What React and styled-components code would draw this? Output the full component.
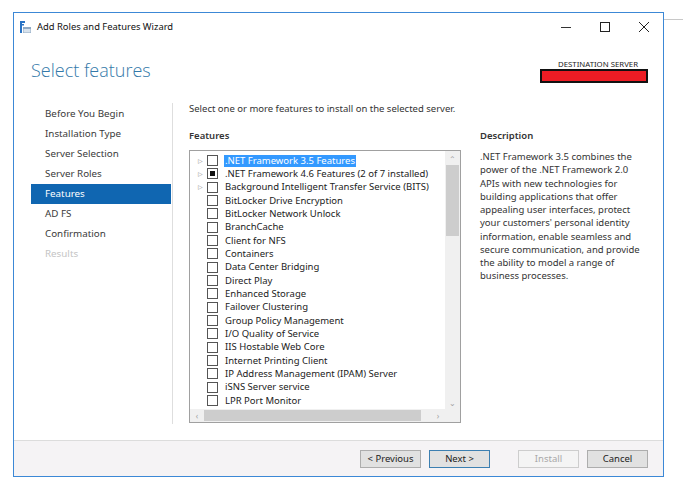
import React from 'react';
import styled, { createGlobalStyle } from 'styled-components';

const GlobalStyle = createGlobalStyle`
  html, body {
    margin: 0;
    padding: 0;
    background: #ffffff;
  }
  body {
    font-family: "Noto Sans", "Open Sans", sans-serif;
    color: #333;
  }
`;

const Page = styled.div`
  position: relative;
  width: 683px;
  height: 487px;
  padding: 12px 0 0 13px;
  box-sizing: border-box;
  overflow: hidden;

  &::after {
    content: '';
    position: absolute;
    top: 19px;
    left: 664px;
    width: 19px;
    height: 1px;
    background: #c8c8c8;
  }
`;

const Window = styled.div`
  width: 651px;
  height: 465px;
  box-sizing: border-box;
  border: 1px solid #3c88d6;
  background: #fff;
  display: flex;
  flex-direction: column;
`;

const TitleBar = styled.div`
  height: 27px;
  display: flex;
  align-items: center;
  padding-left: 6px;
`;

const TitleText = styled.span`
  margin-left: 5px;
  font-size: 9.4px;
  color: #111;
`;

const WindowButtons = styled.div`
  margin-left: auto;
  display: flex;
  height: 100%;
`;

const WinBtn = styled.div`
  width: 39px;
  display: flex;
  align-items: center;
  justify-content: center;
`;

const Header = styled.div`
  height: 60px;
  display: flex;
  align-items: flex-start;
  padding: 18px 15px 0 17px;
  box-sizing: border-box;
`;

const Heading = styled.h1`
  margin: 0;
  font-family: "Open Sans", "Noto Sans", sans-serif;
  font-size: 18px;
  font-weight: 300;
  color: #3479a9;
  line-height: 24px;
`;

const Destination = styled.div`
  margin-left: auto;
  margin-top: 2px;
  display: flex;
  flex-direction: column;
  align-items: flex-end;
`;

const DestLabel = styled.div`
  font-size: 7.8px;
  color: #222;
  margin-right: 10px;
  line-height: 9px;
`;

const RedactBox = styled.div`
  width: 108px;
  height: 14px;
  box-sizing: border-box;
  border: 2px solid #111;
  background: #ed1c24;
`;

const Body = styled.div`
  flex: 1;
  display: flex;
  padding-left: 17px;
`;

const Nav = styled.nav`
  width: 142px;
  padding-top: 1px;
  box-sizing: border-box;
  border-right: 1px solid #dedede;
  margin-bottom: 16px;
  margin-top: 3px;
`;

const NavItem = styled.div`
  height: 20px;
  line-height: 20px;
  padding-left: 14px;
  margin-right: 1px;
  font-size: 9.8px;
  color: ${({ $disabled, $active }) => ($active ? '#fff' : $disabled ? '#c4c4c4' : '#3a3a3a')};
  background: ${({ $active }) => ($active ? '#1066b1' : 'transparent')};
`;

const Content = styled.div`
  flex: 1;
  display: flex;
  padding-left: 16px;
  font-size: 9.5px;
`;

const MainCol = styled.div`
  width: 272px;
  display: flex;
  flex-direction: column;
`;

const Intro = styled.div`
  height: 26px;
  line-height: 18px;
  color: #333;
`;

const SectionLabel = styled.div`
  font-weight: 600;
  color: #333;
  height: 24px;
  line-height: 20px;
`;

const ListBox = styled.div`
  height: 273px;
  box-sizing: border-box;
  border: 1px solid #a0a0a0;
  display: grid;
  grid-template-columns: 1fr 15px;
  grid-template-rows: 1fr 13px;
`;

const Rows = styled.div`
  padding-top: 3px;
  overflow: hidden;
`;

const Row = styled.div`
  height: 13.33px;
  display: flex;
  align-items: center;
  white-space: nowrap;
`;

const Expander = styled.span`
  width: 17px;
  padding-left: 8px;
  box-sizing: border-box;
  font-size: 6px;
  color: #888;
`;

const CheckBox = styled.span`
  width: 11px;
  height: 11px;
  box-sizing: border-box;
  border: 1px solid #555;
  background: #fff;
  display: flex;
  align-items: center;
  justify-content: center;

  &::after {
    content: '';
    width: 5px;
    height: 5px;
    background: ${({ $partial }) => ($partial ? '#111' : 'transparent')};
  }
`;

const RowText = styled.span`
  margin-left: 6px;
  padding: 0 1px;
  line-height: 12px;
  color: ${({ $selected }) => ($selected ? '#fff' : '#222')};
  background: ${({ $selected }) => ($selected ? '#3399ff' : 'transparent')};
`;

const VScroll = styled.div`
  background: #f0f0f0;
  display: flex;
  flex-direction: column;
  align-items: stretch;
`;

const ScrollArrow = styled.div`
  height: 14px;
  display: flex;
  align-items: center;
  justify-content: center;
  color: #a0a0a0;
  font-size: 8px;
`;

const VThumb = styled.div`
  height: 71px;
  margin: 0 1px;
  background: #cdcdcd;
`;

const HScroll = styled.div`
  background: #f0f0f0;
  display: flex;
  align-items: stretch;
`;

const HArrow = styled.div`
  width: 14px;
  display: flex;
  align-items: center;
  justify-content: center;
  color: #a0a0a0;
  font-size: 8px;
`;

const HThumb = styled.div`
  width: 217px;
  margin: 1px 0;
  background: #cdcdcd;
`;

const Spacer = styled.div`
  flex: 1;
`;

const Corner = styled.div`
  background: #f0f0f0;
`;

const DescCol = styled.div`
  margin-left: 19px;
  padding-top: 26px;
  width: 165px;
`;

const DescText = styled.div`
  line-height: 13.25px;
  color: #333;
  white-space: pre-line;
`;

const Footer = styled.div`
  height: 36px;
  border-top: 1px solid #dcdcdc;
  background: #f5f3f5;
  display: flex;
  align-items: center;
  justify-content: flex-end;
  padding-right: 15px;
  box-sizing: border-box;
`;

const Button = styled.button`
  width: 61px;
  height: 18px;
  margin-left: ${({ $gap }) => $gap || 8}px;
  box-sizing: border-box;
  border: 1px solid ${({ $primary, disabled }) => ($primary ? '#3c7fb1' : disabled ? '#cdcdcd' : '#adadad')};
  background: ${({ disabled }) => (disabled ? '#f4f4f4' : '#e1e1e1')};
  color: ${({ disabled }) => (disabled ? '#a8a8a8' : '#222')};
  font-family: "Noto Sans", sans-serif;
  font-size: 9.5px;
  padding: 0;
`;

const navItems = [
  'Before You Begin',
  'Installation Type',
  'Server Selection',
  'Server Roles',
  'Features',
  'AD FS',
  'Confirmation',
  'Results',
];

const features = [
  { name: '.NET Framework 3.5 Features', expand: true, selected: true },
  { name: '.NET Framework 4.6 Features (2 of 7 installed)', expand: true, partial: true },
  { name: 'Background Intelligent Transfer Service (BITS)', expand: true },
  { name: 'BitLocker Drive Encryption' },
  { name: 'BitLocker Network Unlock' },
  { name: 'BranchCache' },
  { name: 'Client for NFS' },
  { name: 'Containers' },
  { name: 'Data Center Bridging' },
  { name: 'Direct Play' },
  { name: 'Enhanced Storage' },
  { name: 'Failover Clustering' },
  { name: 'Group Policy Management' },
  { name: 'I/O Quality of Service' },
  { name: 'IIS Hostable Web Core' },
  { name: 'Internet Printing Client' },
  { name: 'IP Address Management (IPAM) Server' },
  { name: 'iSNS Server service' },
  { name: 'LPR Port Monitor' },
];

const description = `.NET Framework 3.5 combines the
power of the .NET Framework 2.0
APIs with new technologies for
building applications that offer
appealing user interfaces, protect
your customers' personal identity
information, enable seamless and
secure communication, and provide
the ability to model a range of
business processes.`;

const WizardIcon = () => (
  <svg width="12" height="12" viewBox="0 0 12 12">
    <rect x="0" y="0" width="2" height="12" fill="#2a73c4" />
    <rect x="2" y="0" width="3" height="2" fill="#2a73c4" />
    <rect x="2" y="3" width="2" height="1.5" fill="#2a73c4" />
    <path d="M3 6 h8 v6 h-8 z" fill="#8fa9c4" />
    <path d="M3.5 8 h7 v3.5 h-7 z" fill="#d8e2ec" />
  </svg>
);

const App = () => (
  <Page>
    <GlobalStyle />
    <Window>
      <TitleBar>
        <WizardIcon />
        <TitleText>Add Roles and Features Wizard</TitleText>
        <WindowButtons>
          <WinBtn>
            <svg width="10" height="10" viewBox="0 0 10 10">
              <path d="M0 5.5 H10" stroke="#333" strokeWidth="1" />
            </svg>
          </WinBtn>
          <WinBtn>
            <svg width="10" height="10" viewBox="0 0 10 10">
              <rect x="0.5" y="0.5" width="9" height="9" fill="none" stroke="#222" strokeWidth="1" />
            </svg>
          </WinBtn>
          <WinBtn>
            <svg width="10" height="10" viewBox="0 0 10 10">
              <path d="M0 0 L10 10 M10 0 L0 10" stroke="#222" strokeWidth="1" />
            </svg>
          </WinBtn>
        </WindowButtons>
      </TitleBar>

      <Header>
        <Heading>Select features</Heading>
        <Destination>
          <DestLabel>DESTINATION SERVER</DestLabel>
          <RedactBox />
        </Destination>
      </Header>

      <Body>
        <Nav>
          {navItems.map((item) => (
            <NavItem key={item} $active={item === 'Features'} $disabled={item === 'Results'}>
              {item}
            </NavItem>
          ))}
        </Nav>
        <Content>
          <MainCol>
            <Intro>Select one or more features to install on the selected server.</Intro>
            <SectionLabel>Features</SectionLabel>
            <ListBox>
              <Rows>
                {features.map((f) => (
                  <Row key={f.name}>
                    <Expander>{f.expand ? '▷' : ''}</Expander>
                    <CheckBox $partial={f.partial} />
                    <RowText $selected={f.selected}>{f.name}</RowText>
                  </Row>
                ))}
              </Rows>
              <VScroll>
                <ScrollArrow>⌃</ScrollArrow>
                <VThumb />
                <Spacer />
                <ScrollArrow>⌄</ScrollArrow>
              </VScroll>
              <HScroll>
                <HArrow>‹</HArrow>
                <HThumb />
                <Spacer />
                <HArrow>›</HArrow>
              </HScroll>
              <Corner />
            </ListBox>
          </MainCol>
          <DescCol>
            <SectionLabel>Description</SectionLabel>
            <DescText>{description}</DescText>
          </DescCol>
        </Content>
      </Body>

      <Footer>
        <Button>&lt; Previous</Button>
        <Button $primary>Next &gt;</Button>
        <Button disabled $gap={28}>Install</Button>
        <Button>Cancel</Button>
      </Footer>
    </Window>
  </Page>
);

export default App;
